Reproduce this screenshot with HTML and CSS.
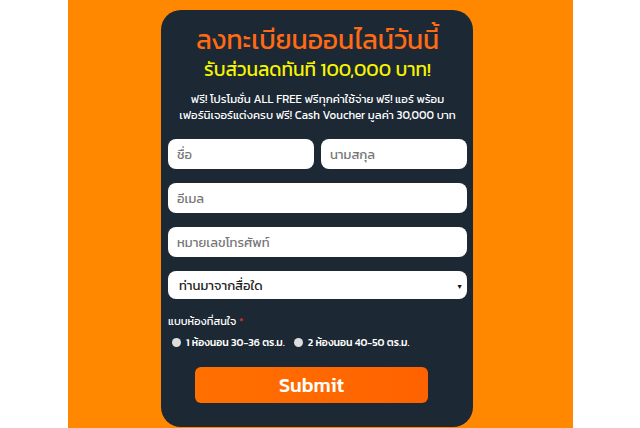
FILE: index.html
```html
<!DOCTYPE html>
<html lang="th">
<head>
    <meta charset="UTF-8">
    <meta name="viewport" content="width=device-width, initial-scale=1.0">
    <title>ลงทะเบียนออนไลน์</title>
    <link rel="stylesheet" href="styles.css">
</head>
<body>
    <div class="page">
        <div class="register-card">
            <h1 class="title">ลงทะเบียนออนไลน์วันนี้</h1>
            <h2 class="subtitle">รับส่วนลดทันที 100,000 บาท!</h2>
            <p class="desc">ฟรี! โปรโมชั่น ALL FREE ฟรีทุกค่าใช้จ่าย ฟรี! แอร์ พร้อม<br>เฟอร์นิเจอร์แต่งครบ ฟรี! Cash Voucher มูลค่า 30,000 บาท</p>
            <form class="form">
                <div class="row">
                    <input type="text" placeholder="ชื่อ">
                    <input type="text" placeholder="นามสกุล">
                </div>
                <input type="email" placeholder="อีเมล">
                <input type="tel" placeholder="หมายเลขโทรศัพท์">
                <div class="select-wrap">
                    <select>
                        <option>ท่านมาจากสื่อใด</option>
                    </select>
                    <span class="caret">▼</span>
                </div>
                <div class="room-label">แบบห้องที่สนใจ <span class="req">*</span></div>
                <div class="radios">
                    <label><span class="dot"></span>1 ห้องนอน 30-36 ตร.ม.</label>
                    <label><span class="dot"></span>2 ห้องนอน 40-50 ตร.ม.</label>
                </div>
                <button type="button" class="submit">Submit</button>
            </form>
        </div>
    </div>
</body>
</html>
```

FILE: styles.css
```css
body {
    margin: 0;
    padding: 0;
    background-color: #fff;
    font-family: "Kanit", "Prompt", "Noto Sans Thai", "Noto Sans", sans-serif;
}

.page {
    width: 505px;
    height: 428px;
    margin-left: 68px;
    background-color: #ff8800;
    overflow: hidden;
}

.register-card {
    width: 299px;
    margin: 10px 0 0 93px;
    padding: 0 6px 24px 7px;
    background-color: #1c2834;
    border-radius: 20px;
    text-align: center;
}

.title {
    margin: 0;
    padding-top: 13px;
    font-size: 26.5px;
    font-weight: 400;
    line-height: 34px;
    color: #ff6a14;
}

.subtitle {
    margin: 0;
    font-size: 19px;
    font-weight: 400;
    line-height: 26px;
    color: #f5f500;
}

.desc {
    margin: 8px 0 0;
    font-size: 11.5px;
    line-height: 16px;
    color: #fff;
}

.form {
    display: flex;
    flex-direction: column;
    gap: 14px;
    margin-top: 16px;
    text-align: left;
}

.row {
    display: flex;
    gap: 7px;
}

.row input {
    flex: 1;
    min-width: 0;
}

input, select {
    box-sizing: border-box;
    height: 30px;
    width: 100%;
    padding: 0 9px;
    border: none;
    border-radius: 8px;
    background-color: #fff;
    font-family: inherit;
    font-size: 13px;
    color: #333;
}

input::placeholder {
    color: #777;
}

.select-wrap {
    position: relative;
    margin-bottom: -8px;
}

select {
    height: 28px;
    padding: 0 11px;
    appearance: none;
    color: #222;
}

.caret {
    position: absolute;
    right: 5px;
    top: 10px;
    font-size: 7px;
    color: #111;
}

.room-label {
    margin-top: 8px;
    font-size: 11px;
    color: #fff;
}

.req {
    color: #e0302a;
}

.radios {
    display: flex;
    gap: 9px;
    margin-top: -9px;
    padding-left: 4px;
    font-size: 10.5px;
    font-weight: 500;
    color: #fff;
}

.radios label {
    display: flex;
    align-items: center;
    gap: 5px;
}

.dot {
    width: 9px;
    height: 9px;
    border-radius: 50%;
    background-color: #ddd;
}

.submit {
    align-self: center;
    width: 233px;
    height: 36px;
    margin-top: 3px;
    margin-left: -12px;
    border: none;
    border-radius: 6px;
    background: linear-gradient(90deg, #ff7000, #ff6200);
    color: #fff;
    font-family: inherit;
    font-size: 20px;
    font-weight: 500;
    cursor: pointer;
}
```
